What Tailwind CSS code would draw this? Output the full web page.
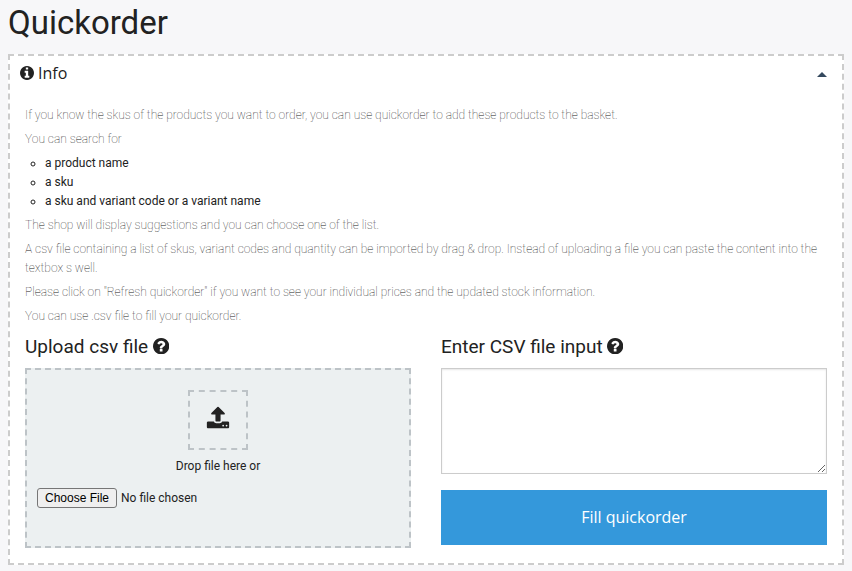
<!DOCTYPE html>
<html lang="en">
<head>
<meta charset="utf-8">
<title>Quickorder</title>
<script src="https://cdn.jsdelivr.net/npm/@tailwindcss/browser@4"></script>
</head>
<body class="h-[571px] overflow-hidden bg-[#f7f7f9] px-2 font-['Roboto',sans-serif] text-[12px] leading-[19px] text-[#222]">
<svg class="hidden">
  <symbol id="info" viewBox="128 128 1536 1536"><path d="M1152 1376v-160q0-14-9-23t-23-9h-96v-512q0-14-9-23t-23-9h-320q-14 0-23 9t-9 23v160q0 14 9 23t23 9h96v320h-96q-14 0-23 9t-9 23v160q0 14 9 23t23 9h448q14 0 23-9t9-23zm-128-896v-160q0-14-9-23t-23-9h-192q-14 0-23 9t-9 23v160q0 14 9 23t23 9h192q14 0 23-9t9-23zm640 416q0 209-103 385.500t-279.500 279.500-385.500 103-385.500-103-279.500-279.500-103-385.500 103-385.500 279.500-279.500 385.500-103 385.500 103 279.500 279.500 103 385.500z"/></symbol>
  <symbol id="question" viewBox="128 128 1536 1536"><path d="M1024 1376v-192q0-14-9-23t-23-9h-192q-14 0-23 9t-9 23v192q0 14 9 23t23 9h192q14 0 23-9t9-23zm256-672q0-88-55.500-163t-138.500-116-170-41q-243 0-371 213-15 24 8 42l132 100q7 6 19 6 16 0 25-12 53-68 86-92 34-24 86-24 48 0 85.500 26t37.500 59q0 38-20 61t-68 45q-63 28-115.500 86.500t-52.500 125.500v36q0 14 9 23t23 9h192q14 0 23-9t9-23q0-19 21.500-49.500t54.500-49.500q32-18 49-28.500t46-35 44.500-48 28-60.500 12.500-81zm384 192q0 209-103 385.500t-279.500 279.500-385.500 103-385.500-103-279.500-279.500-103-385.500 103-385.500 279.500-279.500 385.500-103 385.500 103 279.500 279.500 103 385.500z"/></symbol>
</svg>
<h1 class="h-[54px] pt-[3px] text-[33px] leading-[40px]">Quickorder</h1>
<section class="h-[511px] border-2 border-dashed border-[#ccc] bg-white">
  <header class="flex h-[34px] items-center pr-[15px] pl-[10px] font-['Open_Sans',sans-serif] text-[16px]">
    <svg class="mr-1 size-[14px] fill-[#222]"><use href="#info"/></svg>
    <span>Info</span>
    <svg class="mt-[3px] ml-auto h-[5px] w-[10px] fill-[#34495e]" viewBox="0 0 10 5"><path d="M0 5 5 0l5 5z"/></svg>
  </header>
  <div class="px-[15px] pt-4">
    <div class="space-y-[5px] font-thin text-[#222]">
      <p>If you know the skus of the products you want to order, you can use quickorder to add these products to the basket.</p>
      <p>You can search for</p>
      <ul class="list-[circle] pl-5 font-normal">
        <li>a product name</li>
        <li>a sku</li>
        <li>a sku and variant code or a variant name</li>
      </ul>
      <p>The shop will display suggestions and you can choose one of the list.</p>
      <p>A csv file containing a list of skus, variant codes and quantity can be imported by drag &amp; drop. Instead of uploading a file you can paste the content into the textbox s well.</p>
      <p>Please click on "Refresh quickorder" if you want to see your individual prices and the updated stock information.</p>
      <p>You can use .csv file to fill your quickorder.</p>
    </div>
    <div class="mt-2 grid grid-cols-2 gap-[30px]">
      <div>
        <h2 class="flex h-[34px] items-start gap-[4.5px] text-[19px] leading-[25px]">Upload csv file <svg class="mt-[3.7px] size-[16.3px] fill-[#222]"><use href="#question"/></svg></h2>
        <div class="flex h-[180px] flex-col items-center border-2 border-dashed border-[#bdc3c7] bg-[#ecf0f1] px-[10px] pt-5">
          <div class="flex size-[60px] items-center justify-center border-2 border-dashed border-[#bdc3c7]">
            <svg class="mb-[5px] size-6 fill-[#222]" viewBox="0 0 1792 1792"><path d="M1344 1472q0-26-19-45t-45-19-45 19-19 45 19 45 45 19 45-19 19-45zm256 0q0-26-19-45t-45-19-45 19-19 45 19 45 45 19 45-19 19-45zm128-224v320q0 40-28 68t-68 28h-1472q-40 0-68-28t-28-68v-320q0-40 28-68t68-28h427q21 56 70.500 92t110.500 36h256q61 0 110.500-36t70.500-92h427q40 0 68 28t28 68zm-325-648q-17 40-59 40h-256v448q0 26-19 45t-45 19h-256q-26 0-45-19t-19-45v-448h-256q-42 0-59-40-17-39 14-69l448-448q18-19 45-19t45 19l448 448q31 30 14 69z"/></svg>
          </div>
          <p class="mt-[7px]">Drop file here or</p>
          <input type="file" class="mt-3 block h-5 w-full leading-[15px] file:mr-1 file:h-5 file:rounded-[3px] file:border file:border-solid file:border-[#767676] file:bg-[#efefef] file:px-[7px] file:py-0 file:font-['Liberation_Sans',sans-serif] file:text-[12px] file:text-black">
        </div>
      </div>
      <div>
        <h2 class="flex h-[34px] items-start gap-[4.5px] text-[19px] leading-[25px]">Enter CSV file input <svg class="mt-[3.7px] size-[16.3px] fill-[#222]"><use href="#question"/></svg></h2>
        <textarea class="block h-[106px] w-full resize border border-[#ccc] bg-white shadow-[inset_0_1px_2px_rgba(0,0,0,0.1)]"></textarea>
        <button class="mt-4 h-[55px] w-full bg-[#3498db] font-['Open_Sans',sans-serif] text-[16px] text-white">Fill quickorder</button>
      </div>
    </div>
  </div>
</section>
</body>
</html>
